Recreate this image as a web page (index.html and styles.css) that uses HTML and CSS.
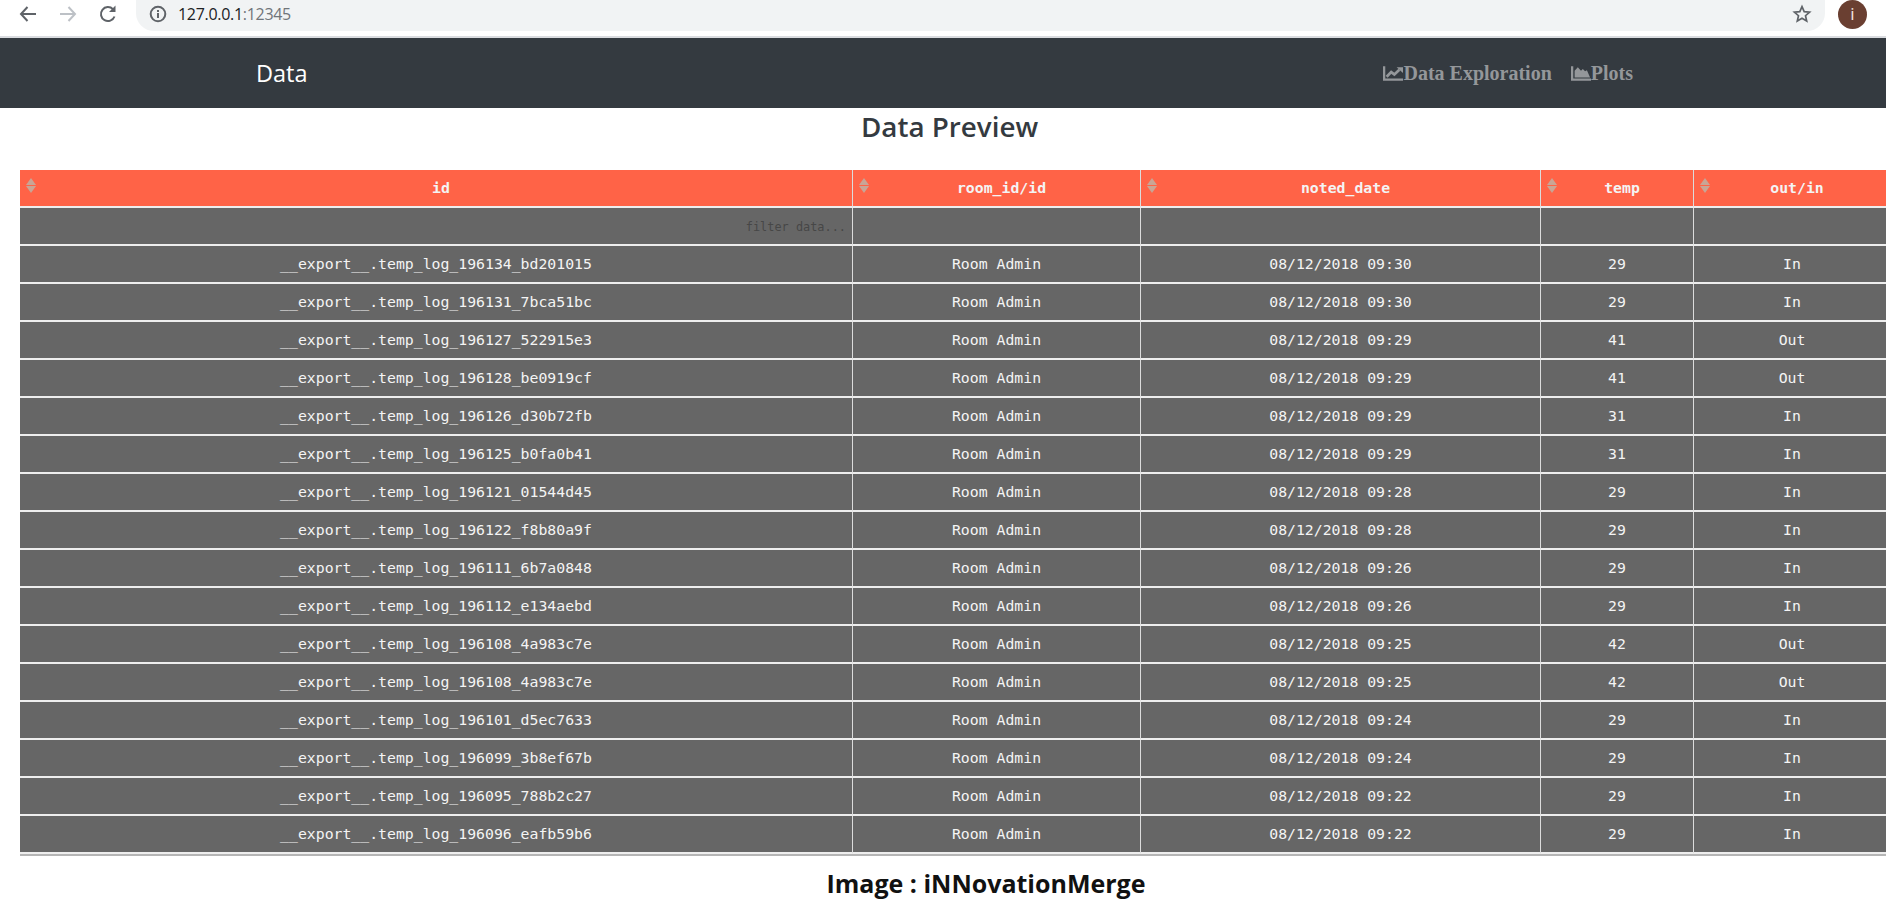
FILE: index.html
```html
<!DOCTYPE html>
<html lang="en">
<head>
  <meta charset="UTF-8">
  <meta name="viewport" content="width=device-width, initial-scale=1.0">
  <title>Data</title>
  <link rel="stylesheet" href="styles.css">
</head>
<body>
  <div class="browser-bar">
    <svg class="tool-icon" width="24" height="24" viewBox="0 0 24 24"><path d="M20 12H5M11.5 5 5 12l6.5 7" fill="none" stroke="#5f6368" stroke-width="2"/></svg>
    <svg class="tool-icon" width="24" height="24" viewBox="0 0 24 24"><path d="M4 12h15M12.5 5 19 12l-6.5 7" fill="none" stroke="#bdc1c6" stroke-width="2"/></svg>
    <svg class="tool-icon" width="24" height="24" viewBox="0 0 24 24"><path d="M18.5 14.5A7 7 0 1 1 17 7.2" fill="none" stroke="#5f6368" stroke-width="2"/><path d="M19.5 3.5v6.5H13z" fill="#5f6368"/></svg>
    <div class="omnibox">
      <svg class="info-icon" width="20" height="20" viewBox="0 0 20 20"><circle cx="10" cy="10" r="7.3" fill="none" stroke="#5f6368" stroke-width="2"/><path d="M9 9h2v5H9zM9 6h2v2H9z" fill="#5f6368"/></svg>
      <span class="url-host">127.0.0.1</span><span class="url-port">:12345</span>
      <svg class="star-icon" width="20" height="20" viewBox="0 0 20 20"><path d="M10 2.6l2.2 5 5.4.5-4.1 3.6 1.2 5.3L10 14.2 5.3 17l1.2-5.3L2.4 8.1l5.4-.5z" fill="none" stroke="#5f6368" stroke-width="1.7"/></svg>
    </div>
    <div class="avatar">i</div>
  </div>

  <nav class="navbar">
    <a class="brand" href="#">Data</a>
    <div class="nav-links">
      <a class="nav-link" href="#">
        <svg width="20" height="15" viewBox="0 0 22 16"><path d="M0 0h2.500v13.500H22V16H0z" fill="currentColor"/><path d="M4 11.500l5-5 3.500 2.500L18 4" fill="none" stroke="currentColor" stroke-width="3"/><path d="M15 1h7v6.500z" fill="currentColor"/></svg>Data Exploration
      </a>
      <a class="nav-link" href="#">
        <svg width="20" height="15" viewBox="0 0 22 16"><path d="M0 0h2.500v13.500H22V16H0z" fill="currentColor"/><path d="M4 12.500V5L7.500 1 11 5l2-2 2.500 2.500 2-1L21 12.500z" fill="currentColor"/></svg>Plots
      </a>
    </div>
  </nav>

  <h1 class="page-title">Data Preview</h1>

  <div class="table-wrap">
    <table class="data-table">
      <colgroup>
        <col class="col-id">
        <col class="col-room">
        <col class="col-date">
        <col class="col-temp">
        <col class="col-out">
      </colgroup>
      <thead>
        <tr>
          <th>id</th>
          <th>room_id/id</th>
          <th>noted_date</th>
          <th>temp</th>
          <th>out/in</th>
        </tr>
      </thead>
      <tbody id="rows">
        <tr class="filter-row">
          <td class="filter-cell">filter data...</td>
          <td></td>
          <td></td>
          <td></td>
          <td></td>
        </tr>
        <tr><td>__export__.temp_log_196134_bd201015</td><td>Room Admin</td><td>08/12/2018 09:30</td><td>29</td><td>In</td></tr>
        <tr><td>__export__.temp_log_196131_7bca51bc</td><td>Room Admin</td><td>08/12/2018 09:30</td><td>29</td><td>In</td></tr>
        <tr><td>__export__.temp_log_196127_522915e3</td><td>Room Admin</td><td>08/12/2018 09:29</td><td>41</td><td>Out</td></tr>
        <tr><td>__export__.temp_log_196128_be0919cf</td><td>Room Admin</td><td>08/12/2018 09:29</td><td>41</td><td>Out</td></tr>
        <tr><td>__export__.temp_log_196126_d30b72fb</td><td>Room Admin</td><td>08/12/2018 09:29</td><td>31</td><td>In</td></tr>
        <tr><td>__export__.temp_log_196125_b0fa0b41</td><td>Room Admin</td><td>08/12/2018 09:29</td><td>31</td><td>In</td></tr>
        <tr><td>__export__.temp_log_196121_01544d45</td><td>Room Admin</td><td>08/12/2018 09:28</td><td>29</td><td>In</td></tr>
        <tr><td>__export__.temp_log_196122_f8b80a9f</td><td>Room Admin</td><td>08/12/2018 09:28</td><td>29</td><td>In</td></tr>
        <tr><td>__export__.temp_log_196111_6b7a0848</td><td>Room Admin</td><td>08/12/2018 09:26</td><td>29</td><td>In</td></tr>
        <tr><td>__export__.temp_log_196112_e134aebd</td><td>Room Admin</td><td>08/12/2018 09:26</td><td>29</td><td>In</td></tr>
        <tr><td>__export__.temp_log_196108_4a983c7e</td><td>Room Admin</td><td>08/12/2018 09:25</td><td>42</td><td>Out</td></tr>
        <tr><td>__export__.temp_log_196108_4a983c7e</td><td>Room Admin</td><td>08/12/2018 09:25</td><td>42</td><td>Out</td></tr>
        <tr><td>__export__.temp_log_196101_d5ec7633</td><td>Room Admin</td><td>08/12/2018 09:24</td><td>29</td><td>In</td></tr>
        <tr><td>__export__.temp_log_196099_3b8ef67b</td><td>Room Admin</td><td>08/12/2018 09:24</td><td>29</td><td>In</td></tr>
        <tr><td>__export__.temp_log_196095_788b2c27</td><td>Room Admin</td><td>08/12/2018 09:22</td><td>29</td><td>In</td></tr>
        <tr><td>__export__.temp_log_196096_eafb59b6</td><td>Room Admin</td><td>08/12/2018 09:22</td><td>29</td><td>In</td></tr>
      </tbody>
    </table>
  </div>

  <p class="credit">Image : iNNovationMerge</p>
</body>
</html>
```

FILE: styles.css
```css
html, body {
  overflow: hidden;
}

body {
  margin: 0;
  height: 906px;
  background: #fff;
  font-family: "Open Sans", sans-serif;
}

.browser-bar {
  display: flex;
  align-items: flex-start;
  height: 36px;
  border-bottom: 2px solid #dadce0;
  padding-left: 16px;
  overflow: hidden;
}

.tool-icon {
  margin: 2px 16px 0 0;
  flex: none;
}

.omnibox {
  flex: 1;
  display: flex;
  align-items: center;
  box-sizing: border-box;
  height: 31px;
  padding: 0 13px 4px 12px;
  background: #f1f3f4;
  border-radius: 0 0 18px 18px;
  font-size: 16px;
  letter-spacing: -0.3px;
}

.info-icon {
  margin-right: 10px;
}

.url-host {
  color: #202124;
}

.url-port {
  color: #70757a;
}

.star-icon {
  margin-left: auto;
}

.avatar {
  flex: none;
  width: 29px;
  height: 29px;
  margin: 0 19px 0 13px;
  border-radius: 50%;
  background: #6a3f31;
  color: #f3e6e0;
  font-size: 17px;
  line-height: 28px;
  text-align: center;
}

.navbar {
  display: flex;
  align-items: center;
  justify-content: space-between;
  height: 70px;
  padding: 0 253px 0 256px;
  background: #343a40;
}

.brand {
  color: #fff;
  font-size: 23.500px;
  text-decoration: none;
}

.nav-links {
  display: flex;
  gap: 19px;
}

.nav-link {
  display: flex;
  align-items: center;
  color: #94979a;
  font-family: "Liberation Serif", serif;
  font-size: 20px;
  font-weight: bold;
  text-decoration: none;
}

.page-title {
  margin: 0;
  height: 62px;
  padding-left: 13px;
  color: #343a40;
  font-size: 27.800px;
  font-weight: 600;
  line-height: 36px;
  text-align: center;
}

.table-wrap {
  margin-left: 20px;
  border-bottom: 2px solid #b5b5b5;
  overflow: hidden;
}

.data-table {
  table-layout: fixed;
  width: 1871px;
  border-collapse: separate;
  border-spacing: 0;
  font-family: "DejaVu Sans Mono", monospace;
  font-size: 14.8px;
  color: #f4f4f4;
}

.col-id { width: 833px; }
.col-room { width: 288px; }
.col-date { width: 400px; }
.col-temp { width: 153px; }
.col-out { width: 197px; }

.data-table th,
.data-table td {
  box-sizing: border-box;
  height: 38px;
  padding: 0 0 2px;
  border-right: 1px solid #dcdcdc;
  border-bottom: 2px solid #eeeeee;
  text-align: center;
}

.data-table th {
  position: relative;
  padding-left: 10px;
  background: #ff6347;
  font-weight: bold;
}

.data-table th::before,
.data-table th::after {
  content: "";
  position: absolute;
  left: 6px;
  border-left: 5.5px solid transparent;
  border-right: 5.5px solid transparent;
}

.data-table th::before {
  top: 8px;
  border-bottom: 7px solid #c9a596;
}

.data-table th::after {
  top: 16px;
  border-top: 7px solid #c9a596;
}

.data-table td {
  background: #666666;
}

.data-table .filter-cell {
  padding: 1px 6px 0 0;
  color: #474747;
  font-size: 11.900px;
  text-align: right;
}

.credit {
  margin: 10px 0 0;
  padding-left: 86px;
  color: #111;
  font-size: 25px;
  font-weight: bold;
  text-align: center;
}
```
